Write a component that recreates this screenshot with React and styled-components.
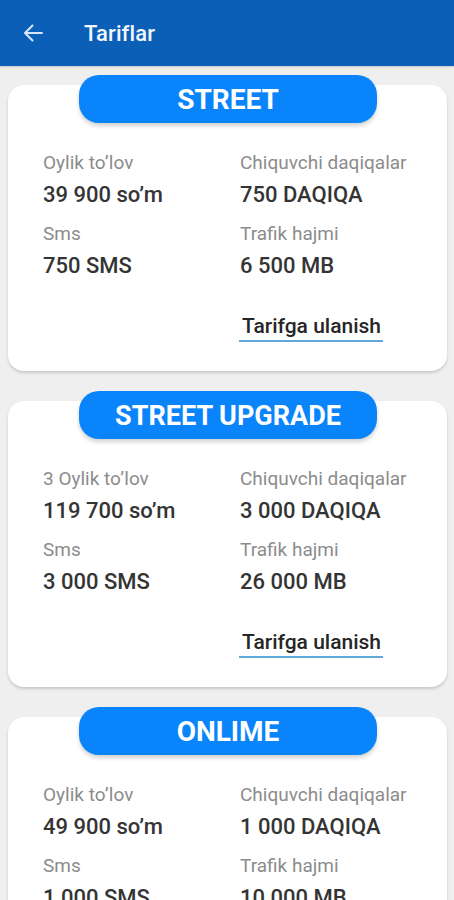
import React from "react";
import styled, { createGlobalStyle } from "styled-components";

const Global = createGlobalStyle`
  html, body { margin: 0; padding: 0; background: #efefef; }
  body { font-family: Roboto, "Noto Sans", Arial, sans-serif; }
  * { box-sizing: border-box; }
`;

const Page = styled.div`
  width: 454px;
  min-height: 900px;
  background: #efefef;
  overflow: hidden;
`;

const Header = styled.header`
  height: 66px;
  background: #0b5fb6;
  display: flex;
  align-items: center;
  padding-left: 23px;
  gap: 41px;
  box-shadow: 0 1px 2px rgba(0, 0, 0, 0.18);
`;

const BackIcon = styled.svg`
  width: 20px;
  height: 18px;
  flex: none;
`;

const Title = styled.h1`
  margin: 0;
  font-size: 22px;
  font-weight: 500;
  color: #f1f6fd;
  letter-spacing: 0.1px;
`;

const List = styled.main`
  display: flex;
  flex-direction: column;
  gap: 20px;
  padding: 9px 7px 0 8px;
`;

const Tariff = styled.section`
  display: flex;
  flex-direction: column;
  align-items: center;
`;

const Pill = styled.div`
  position: relative;
  z-index: 1;
  width: 298px;
  height: 48px;
  border-radius: 20px;
  background: #0a84fb;
  color: #fff;
  font-size: ${(p) => p.$size}px;
  font-weight: 700;
  display: flex;
  align-items: center;
  justify-content: center;
  padding-top: 1px;
  box-shadow: 0 3px 4px rgba(0, 0, 0, 0.18);
  margin-left: 1px;
`;

const Card = styled.div`
  align-self: stretch;
  margin-top: -38px;
  background: #fff;
  border-radius: 16px;
  box-shadow: 0 2px 3px rgba(0, 0, 0, 0.16);
  padding: 66px 0 29px 35px;
  display: flex;
  flex-direction: column;
`;

const Grid = styled.div`
  display: grid;
  grid-template-columns: 197px 1fr;
  row-gap: 13px;
`;

const Cell = styled.div`
  display: flex;
  flex-direction: column;
  gap: 6px;
`;

const Label = styled.div`
  font-size: 19px;
  line-height: 24px;
  color: #8c8c8c;
`;

const Value = styled.div`
  font-size: 22px;
  line-height: 28px;
  font-weight: 500;
  color: #343434;
`;

const Footer = styled.div`
  display: grid;
  grid-template-columns: 197px 1fr;
  margin-top: 32px;
`;

const Connect = styled.span`
  grid-column: 2;
  justify-self: start;
  margin-left: -1px;
  padding: 0 2px 0 3px;
  font-size: 21px;
  line-height: 28px;
  font-weight: 500;
  color: #262626;
  border-bottom: 2px solid #5fa9d9;
`;

const tariffs = [
  {
    name: "STREET",
    size: 28,
    cells: [
      ["Oylik to\u2019lov", "39 900 so\u2019m"],
      ["Chiquvchi daqiqalar", "750 DAQIQA"],
      ["Sms", "750 SMS"],
      ["Trafik hajmi", "6 500 MB"],
    ],
  },
  {
    name: "STREET UPGRADE",
    size: 27,
    cells: [
      ["3 Oylik to\u2019lov", "119 700 so\u2019m"],
      ["Chiquvchi daqiqalar", "3 000 DAQIQA"],
      ["Sms", "3 000 SMS"],
      ["Trafik hajmi", "26 000 MB"],
    ],
  },
  {
    name: "ONLIME",
    size: 28,
    cells: [
      ["Oylik to\u2019lov", "49 900 so\u2019m"],
      ["Chiquvchi daqiqalar", "1 000 DAQIQA"],
      ["Sms", "1 000 SMS"],
      ["Trafik hajmi", "10 000 MB"],
    ],
  },
];

export default function App() {
  return (
    <Page>
      <Global />
      <Header>
        <BackIcon viewBox="0 0 20 18" fill="none">
          <path
            d="M19 9H2.5M9.5 1.5L2 9l7.5 7.5"
            stroke="#d6e6fb"
            strokeWidth="2"
            strokeLinecap="round"
            strokeLinejoin="round"
          />
        </BackIcon>
        <Title>Tariflar</Title>
      </Header>
      <List>
        {tariffs.map((t) => (
          <Tariff key={t.name}>
            <Pill $size={t.size}>{t.name}</Pill>
            <Card>
              <Grid>
                {t.cells.map(([l, v]) => (
                  <Cell key={l}>
                    <Label>{l}</Label>
                    <Value>{v}</Value>
                  </Cell>
                ))}
              </Grid>
              <Footer>
                <Connect>Tarifga ulanish</Connect>
              </Footer>
            </Card>
          </Tariff>
        ))}
      </List>
    </Page>
  );
}
